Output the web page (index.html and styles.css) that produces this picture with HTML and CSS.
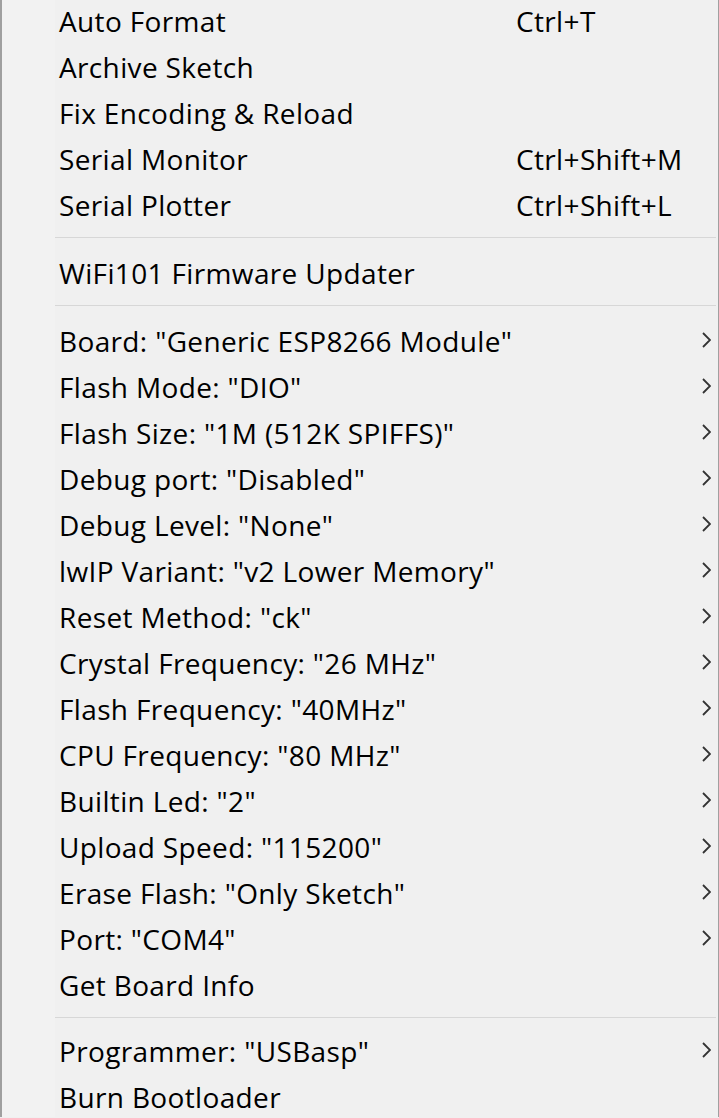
FILE: index.html
```html
<!DOCTYPE html>
<html>
<head>
<meta charset="utf-8">
<link rel="stylesheet" href="styles.css">
</head>
<body>
<div class="menu">
  <div class="item"><span class="label">Auto Format</span><span class="key">Ctrl+T</span><span class="sub"></span></div>
  <div class="item"><span class="label">Archive Sketch</span><span class="key"></span><span class="sub"></span></div>
  <div class="item"><span class="label">Fix Encoding &amp; Reload</span><span class="key"></span><span class="sub"></span></div>
  <div class="item"><span class="label">Serial Monitor</span><span class="key">Ctrl+Shift+M</span><span class="sub"></span></div>
  <div class="item"><span class="label">Serial Plotter</span><span class="key">Ctrl+Shift+L</span><span class="sub"></span></div>
  <div class="sep"></div>
  <div class="item"><span class="label">WiFi101 Firmware Updater</span><span class="key"></span><span class="sub"></span></div>
  <div class="sep"></div>
  <div class="item"><span class="label">Board: "Generic ESP8266 Module"</span><span class="key"></span><span class="sub"><svg width="9" height="16" viewBox="0 0 9 16"><polyline points="1,1 8,8 1,15" fill="none" stroke="#333" stroke-width="1.8"/></svg></span></div>
  <div class="item"><span class="label">Flash Mode: "DIO"</span><span class="key"></span><span class="sub"><svg width="9" height="16" viewBox="0 0 9 16"><polyline points="1,1 8,8 1,15" fill="none" stroke="#333" stroke-width="1.8"/></svg></span></div>
  <div class="item"><span class="label">Flash Size: "1M (512K SPIFFS)"</span><span class="key"></span><span class="sub"><svg width="9" height="16" viewBox="0 0 9 16"><polyline points="1,1 8,8 1,15" fill="none" stroke="#333" stroke-width="1.8"/></svg></span></div>
  <div class="item"><span class="label">Debug port: "Disabled"</span><span class="key"></span><span class="sub"><svg width="9" height="16" viewBox="0 0 9 16"><polyline points="1,1 8,8 1,15" fill="none" stroke="#333" stroke-width="1.8"/></svg></span></div>
  <div class="item"><span class="label">Debug Level: "None"</span><span class="key"></span><span class="sub"><svg width="9" height="16" viewBox="0 0 9 16"><polyline points="1,1 8,8 1,15" fill="none" stroke="#333" stroke-width="1.8"/></svg></span></div>
  <div class="item"><span class="label">lwIP Variant: "v2 Lower Memory"</span><span class="key"></span><span class="sub"><svg width="9" height="16" viewBox="0 0 9 16"><polyline points="1,1 8,8 1,15" fill="none" stroke="#333" stroke-width="1.8"/></svg></span></div>
  <div class="item"><span class="label">Reset Method: "ck"</span><span class="key"></span><span class="sub"><svg width="9" height="16" viewBox="0 0 9 16"><polyline points="1,1 8,8 1,15" fill="none" stroke="#333" stroke-width="1.8"/></svg></span></div>
  <div class="item"><span class="label">Crystal Frequency: "26 MHz"</span><span class="key"></span><span class="sub"><svg width="9" height="16" viewBox="0 0 9 16"><polyline points="1,1 8,8 1,15" fill="none" stroke="#333" stroke-width="1.8"/></svg></span></div>
  <div class="item"><span class="label">Flash Frequency: "40MHz"</span><span class="key"></span><span class="sub"><svg width="9" height="16" viewBox="0 0 9 16"><polyline points="1,1 8,8 1,15" fill="none" stroke="#333" stroke-width="1.8"/></svg></span></div>
  <div class="item"><span class="label">CPU Frequency: "80 MHz"</span><span class="key"></span><span class="sub"><svg width="9" height="16" viewBox="0 0 9 16"><polyline points="1,1 8,8 1,15" fill="none" stroke="#333" stroke-width="1.8"/></svg></span></div>
  <div class="item"><span class="label">Builtin Led: "2"</span><span class="key"></span><span class="sub"><svg width="9" height="16" viewBox="0 0 9 16"><polyline points="1,1 8,8 1,15" fill="none" stroke="#333" stroke-width="1.8"/></svg></span></div>
  <div class="item"><span class="label">Upload Speed: "115200"</span><span class="key"></span><span class="sub"><svg width="9" height="16" viewBox="0 0 9 16"><polyline points="1,1 8,8 1,15" fill="none" stroke="#333" stroke-width="1.8"/></svg></span></div>
  <div class="item"><span class="label">Erase Flash: "Only Sketch"</span><span class="key"></span><span class="sub"><svg width="9" height="16" viewBox="0 0 9 16"><polyline points="1,1 8,8 1,15" fill="none" stroke="#333" stroke-width="1.8"/></svg></span></div>
  <div class="item"><span class="label">Port: "COM4"</span><span class="key"></span><span class="sub"><svg width="9" height="16" viewBox="0 0 9 16"><polyline points="1,1 8,8 1,15" fill="none" stroke="#333" stroke-width="1.8"/></svg></span></div>
  <div class="item"><span class="label">Get Board Info</span><span class="key"></span><span class="sub"></span></div>
  <div class="sep sep-last"></div>
  <div class="item"><span class="label">Programmer: "USBasp"</span><span class="key"></span><span class="sub"><svg width="9" height="16" viewBox="0 0 9 16"><polyline points="1,1 8,8 1,15" fill="none" stroke="#333" stroke-width="1.8"/></svg></span></div>
  <div class="item"><span class="label">Burn Bootloader</span><span class="key"></span><span class="sub"></span></div>
</div>
</body>
</html>
```
FILE: styles.css
```css
html, body {
  margin: 0;
  padding: 0;
  overflow: hidden;
  background: #f0f0f0;
}
.menu {
  box-sizing: border-box;
  width: 719px;
  height: 1118px;
  margin-top: -1px;
  border-left: 2px solid #a0a0a0;
  border-right: 1px solid #a0a0a0;
  padding-right: 1px;
  background: linear-gradient(to right, #f2f2f2 53px, #f0f0f0 53px);
  font-family: "Open Sans", "Noto Sans", sans-serif;
  font-size: 28px;
  letter-spacing: 0.35px;
  color: #000;
}
.item {
  display: grid;
  grid-template-columns: 457px 1fr 30px;
  align-items: center;
  height: 46px;
  padding-left: 57px;
  white-space: nowrap;
}
.label, .key {
  line-height: 44px;
  padding-bottom: 2px;
}
.sub {
  display: flex;
  align-items: center;
  justify-content: flex-end;
  padding-right: 6px;
  height: 46px;
}
.sub svg {
  display: block;
  margin-top: -4px;
}
.sep {
  height: 22px;
  display: flex;
  flex-direction: column;
}
.sep::before {
  content: "";
  display: block;
  margin: 8px 1px 0 53px;
  height: 1px;
  background: #d7d7d7;
}
.sep-last {
  height: 20px;
}
```
